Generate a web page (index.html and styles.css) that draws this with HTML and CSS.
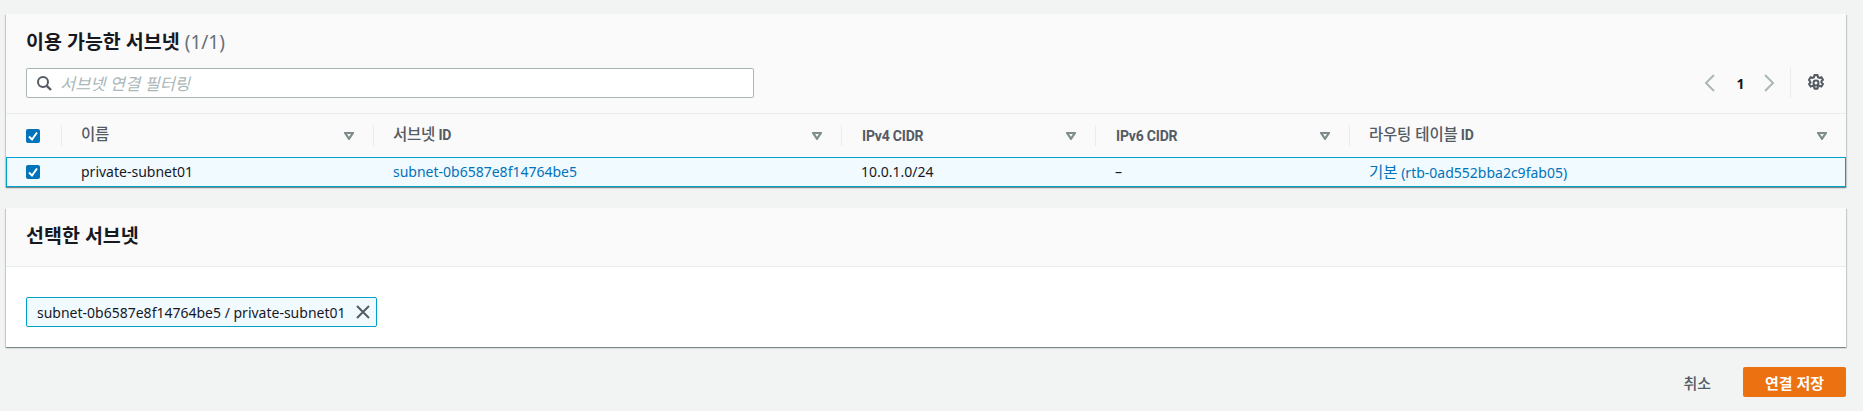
FILE: index.html
```html
<!DOCTYPE html>
<html lang="ko">
<head>
<meta charset="utf-8">
<title>서브넷 연결</title>
<link rel="stylesheet" href="styles.css">
</head>
<body>
<main class="page">
  <section class="panel panel-table">
    <div class="head">
      <h2 class="title">이용 가능한 서브넷 <span class="count">(1/1)</span></h2>
      <div class="tools">
        <div class="search">
          <svg class="search-icon" viewBox="0 0 16 16" width="16" height="16"><circle cx="7" cy="7" r="5" fill="none" stroke="#545b64" stroke-width="2"/><path d="M10.800 10.800 15 15" stroke="#545b64" stroke-width="2.400" fill="none"/></svg>
          <span class="placeholder">서브넷 연결 필터링</span>
        </div>
        <div class="pager">
          <svg class="chev" viewBox="0 0 12 18" width="12" height="18"><path d="M10 1 2 9l8 8" fill="none" stroke="#aab7b8" stroke-width="2"/></svg>
          <span class="page-no">1</span>
          <svg class="chev" viewBox="0 0 12 18" width="12" height="18"><path d="m2 1 8 8-8 8" fill="none" stroke="#aab7b8" stroke-width="2"/></svg>
          <span class="pager-sep"></span>
          <svg class="gear" viewBox="0 0 16 16" width="18" height="18"><path d="M6.600 1h2.800l.4 1.900 1.200.6 1.800-.7 1.400 2.400-1.400 1.300v1.000l1.400 1.300-1.400 2.400-1.800-.7-1.200.6-.4 1.900H6.600l-.4-1.900-1.200-.6-1.800.7-1.400-2.400 1.400-1.300V7.500L1.800 5.200l1.400-2.400 1.800.7 1.200-.6z" fill="none" stroke="#545b64" stroke-width="1.800" stroke-linejoin="round"/><circle cx="8" cy="8" r="2.200" fill="none" stroke="#545b64" stroke-width="1.800"/></svg>
        </div>
      </div>
    </div>
    <div class="grid grid-head">
      <div class="cell cell-check"><span class="check"><svg viewBox="0 0 14 14" width="14" height="14"><path d="m3 7.500 3 3 5-7" fill="none" stroke="#fff" stroke-width="2"/></svg></span></div>
      <div class="cell th"><span class="th-text"><span class="ko">이름</span></span><svg class="sort" viewBox="0 0 10 8" width="10" height="8"><path d="M1.200 1h7.600L5 6.800z" fill="none" stroke="#7f8c8d" stroke-width="2.200"/></svg></div>
      <div class="cell th"><span class="th-text"><span class="ko">서브넷</span> ID</span><svg class="sort" viewBox="0 0 10 8" width="10" height="8"><path d="M1.200 1h7.600L5 6.800z" fill="none" stroke="#7f8c8d" stroke-width="2.200"/></svg></div>
      <div class="cell th"><span class="th-text th-latin">IPv4 CIDR</span><svg class="sort" viewBox="0 0 10 8" width="10" height="8"><path d="M1.200 1h7.600L5 6.800z" fill="none" stroke="#7f8c8d" stroke-width="2.200"/></svg></div>
      <div class="cell th"><span class="th-text th-latin">IPv6 CIDR</span><svg class="sort" viewBox="0 0 10 8" width="10" height="8"><path d="M1.200 1h7.600L5 6.800z" fill="none" stroke="#7f8c8d" stroke-width="2.200"/></svg></div>
      <div class="cell th"><span class="th-text"><span class="ko">라우팅 테이블</span> ID</span><svg class="sort" viewBox="0 0 10 8" width="10" height="8"><path d="M1.200 1h7.600L5 6.800z" fill="none" stroke="#7f8c8d" stroke-width="2.200"/></svg></div>
    </div>
    <div class="grid grid-row">
      <div class="cell cell-check"><span class="check"><svg viewBox="0 0 14 14" width="14" height="14"><path d="m3 7.500 3 3 5-7" fill="none" stroke="#fff" stroke-width="2"/></svg></span></div>
      <div class="cell td">private-subnet01</div>
      <div class="cell td"><a class="link" href="#">subnet-0b6587e8f14764be5</a></div>
      <div class="cell td">10.0.1.0/24</div>
      <div class="cell td">–</div>
      <div class="cell td"><a class="link" href="#"><span class="ko-row">기본</span> (rtb-0ad552bba2c9fab05)</a></div>
    </div>
  </section>

  <section class="panel panel-selected">
    <div class="head-simple"><h2 class="title">선택한 서브넷</h2></div>
    <div class="body">
      <div class="chip">
        <span>subnet-0b6587e8f14764be5 / private-subnet01</span>
        <svg class="chip-x" viewBox="0 0 14 14" width="14" height="14"><path d="m1 1 12 12M13 1 1 13" fill="none" stroke="#545b64" stroke-width="2"/></svg>
      </div>
    </div>
  </section>

  <div class="actions">
    <button class="btn-link" type="button">취소</button>
    <button class="btn-primary" type="button">연결 저장</button>
  </div>
</main>
</body>
</html>
```

FILE: styles.css
```css
* { box-sizing: border-box; }

html, body {
  margin: 0;
  height: 411px;
  overflow: hidden;
  background: #f2f3f3;
}

body {
  font-family: "Noto Sans", "Noto Sans CJK KR", sans-serif;
  font-size: 14px;
  color: #16191f;
}

.page {
  display: flex;
  flex-direction: column;
  width: 1840px;
  margin-left: 6px;
  padding-top: 14px;
}

.panel {
  background: #fff;
  box-shadow: 0 1px 1px 0 rgba(0, 28, 36, .3), 1px 1px 1px 0 rgba(0, 28, 36, .15), -1px 1px 1px 0 rgba(0, 28, 36, .15);
}

.panel-table { height: 173px; background: #fafafa; }
.panel-selected { margin-top: 21px; height: 139px; }

.head {
  height: 100px;
  padding: 15px 20px 0 20px;
  border-bottom: 1px solid #eaeded;
  background: #fafafa;
}

.title {
  margin: 0;
  font-size: 19.5px;
  line-height: 26px;
  font-weight: 700;
}

.count { font-weight: 400; color: #687078; font-size: 19px; }

.tools {
  display: flex;
  align-items: center;
  justify-content: space-between;
  margin-top: 13px;
  height: 30px;
}

.search {
  display: flex;
  align-items: center;
  width: 728px;
  height: 30px;
  padding-left: 9px;
  background: #fff;
  border: 1px solid #aab7b8;
  border-radius: 2px;
  gap: 8px;
}

.placeholder { font-style: italic; color: #aab7b8; font-size: 16.500px; }

.pager {
  display: flex;
  align-items: center;
  height: 30px;
}

.chev { display: block; }
.page-no { width: 47px; padding-left: 2px; text-align: center; font-weight: 700; font-size: 14px; }
.pager-sep { width: 1px; height: 30px; background: #eaeded; margin: 0 16px 0 15px; }
.gear { display: block; margin-right: 1px; }

.grid {
  display: grid;
  grid-template-columns: 55px 312px 468px 254px 254px 497px;
}

.grid-head { height: 43px; align-items: center; background: #fafafa; }

.grid-row {
  height: 30px;
  background: #f1faff;
  border: 1px solid #00a1c9;
  grid-template-columns: 54px 312px 468px 254px 254px 496px;
}

.cell { display: flex; align-items: center; min-width: 0; }
.cell-check { padding-left: 20px; }
.grid-row .cell-check { padding-left: 19px; }
.grid-head .cell-check { height: 21px; }

.check {
  display: block;
  width: 14px;
  height: 14px;
  border-radius: 2px;
  background: #0073bb;
}
.check svg { display: block; }

.th {
  height: 21px;
  justify-content: space-between;
  padding: 0 19px 0 19px;
  border-left: 1px solid #eaeded;
  font-family: Roboto, "Noto Sans CJK KR", sans-serif;
  font-weight: 700;
  letter-spacing: -.2px;
  color: #545b64;
}

.th-text { line-height: 16px; padding-bottom: 3px; }
.th-latin { padding-left: 1px; padding-bottom: 0; }

.ko { font-size: 15.500px; font-family: "Noto Sans CJK KR", sans-serif; font-weight: 500; }
.ko-row { font-size: 15.500px; }

.sort { display: block; flex: none; }

.td { padding-left: 20px; line-height: 20px; }

.link { color: #0073bb; text-decoration: none; }

.head-simple {
  height: 59px;
  padding: 15px 20px 0;
  background: #fafafa;
  border-bottom: 1px solid #eaeded;
}

.body { padding: 30px 20px 0; }

.chip {
  display: inline-flex;
  align-items: center;
  height: 30px;
  width: 351px;
  padding: 0 4px 0 10px;
  justify-content: space-between;
  background: #f1faff;
  border: 1px solid #00a1c9;
  border-radius: 2px;
}
.chip-x { display: block; flex: none; margin-right: 2px; }

.actions {
  display: flex;
  justify-content: flex-end;
  align-items: center;
  margin-top: 20px;
  gap: 32px;
}

.btn-link,
.btn-primary {
  font-family: inherit;
  font-size: 15px;
  font-weight: 500;
  border: 0;
  height: 30px;
  border-radius: 2px;
  padding: 0;
}

.btn-link { background: transparent; color: #545b64; }
.btn-primary { width: 103px; background: #ec7211; color: #fff; font-weight: 700; }
```
